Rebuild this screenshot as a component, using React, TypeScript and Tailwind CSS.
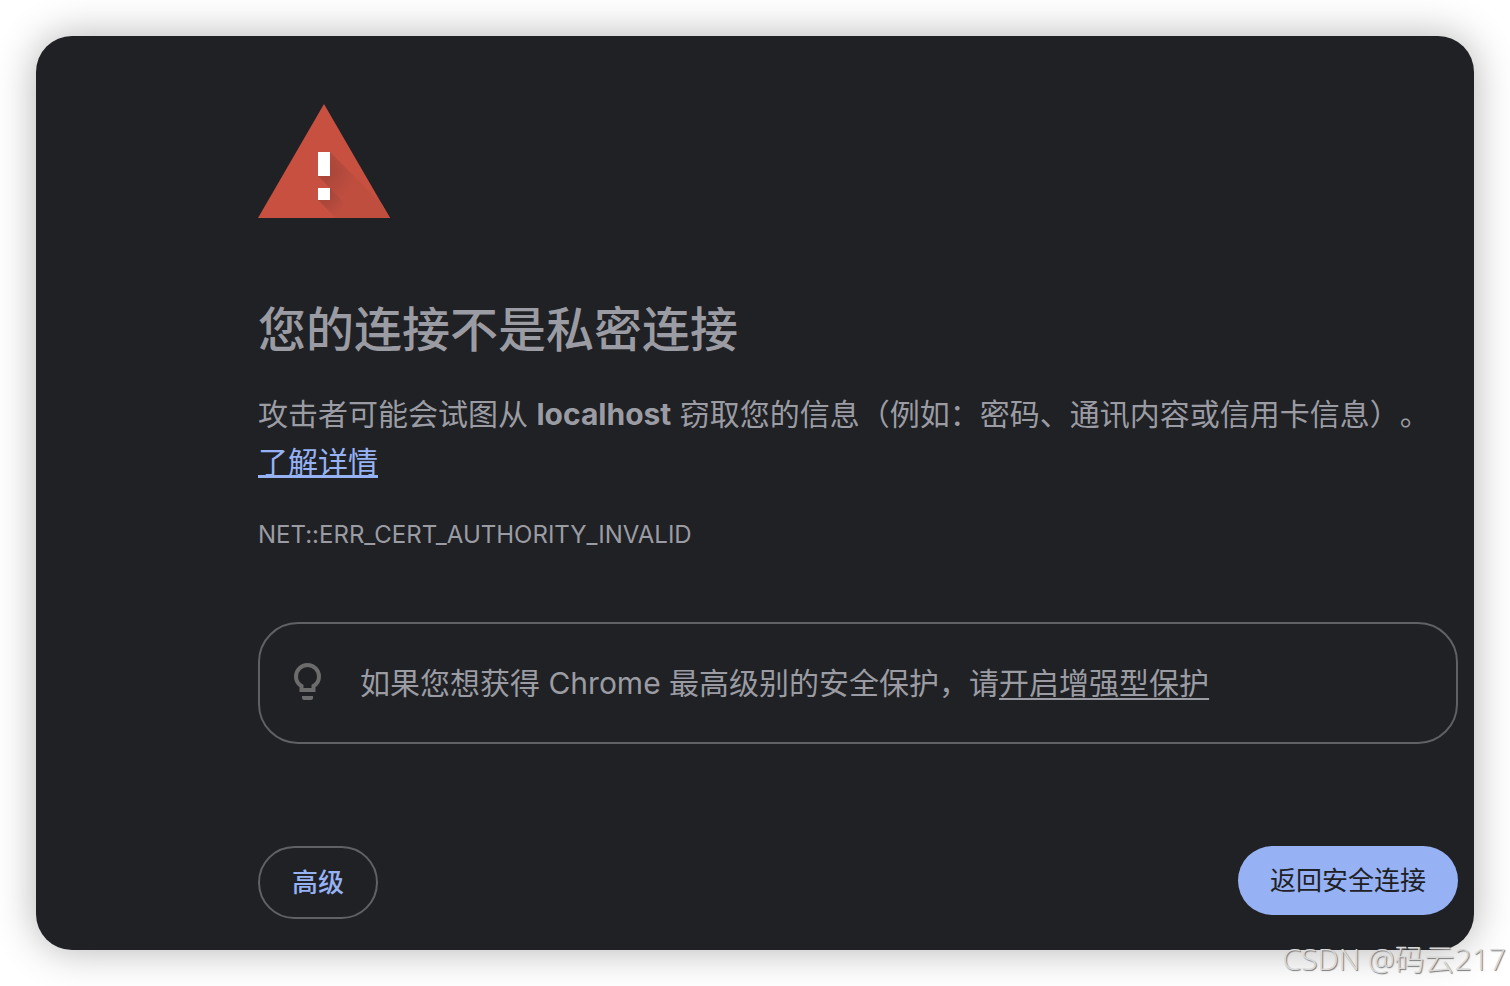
import React from "react";

const WarningIcon = () => (
  <svg width="132" height="114" viewBox="0 0 132 114" aria-hidden="true">
    <defs>
      <radialGradient id="shade" gradientUnits="userSpaceOnUse" cx="66" cy="66" r="34">
        <stop offset="0" stopColor="#a24338" />
        <stop offset="0.4" stopColor="#b0493c" />
        <stop offset="1" stopColor="#c04e3f" />
      </radialGradient>
      <radialGradient id="dotShade" gradientUnits="userSpaceOnUse" cx="66" cy="90" r="24">
        <stop offset="0" stopColor="#a24338" />
        <stop offset="0.4" stopColor="#ac483b" />
        <stop offset="1" stopColor="#c04e3f" />
      </radialGradient>
      <clipPath id="triangle">
        <path d="M66 0 132 114H0z" />
      </clipPath>
    </defs>
    <path d="M66 0 132 114H0z" fill="#c75040" />
    <g clipPath="url(#triangle)">
      <path d="M72 48 138 114H102L60 72z" fill="url(#shade)" />
      <path d="M72 84 102 114H78L60 96z" fill="url(#dotShade)" />
    </g>
    <path d="M60 48h12v24H60zM60 84h12v12H60z" fill="#fff" />
  </svg>
);

const BulbIcon = () => (
  <svg width="30" height="42" viewBox="-1 0 30 42" aria-hidden="true">
    <path
      d="M8.500 28V24C5 22 3 18.500 3 14.500a11.500 11.500 0 0 1 23 0c0 4-2 7.500-5.500 9.500V28z"
      fill="none"
      stroke="#6c6c6c"
      strokeWidth="4"
    />
    <path d="M9 34h11v2a2 2 0 0 1-2 2h-7a2 2 0 0 1-2-2z" fill="#6c6c6c" />
  </svg>
);

const App = () => {
  return (
    <div className="relative bg-white p-9 font-['Inter','Noto_Sans_CJK_SC',sans-serif] text-[#9b9ca3] [font-feature-settings:'calt'_0]">
      <main
        lang="zh-CN"
        className="rounded-[36px] bg-[#202124] pt-[68px] pr-4 pb-[31px] pl-[222px] shadow-[0_0_40px_rgba(0,0,0,0.3)]"
      >
        <WarningIcon />
        <h1 className="mt-[82px] text-5xl leading-[60px] font-medium">
          您的连接不是私密连接
        </h1>
        <p className="mt-[30px] text-[30px] leading-[48px] [text-spacing-trim:space-all]">
          攻击者可能会试图从 <strong className="font-bold">localhost</strong>{" "}
          窃取您的信息（例如：密码、通讯内容或信用卡信息）。{" "}
          <a
            href="#details"
            className="inline-block text-[#96b2f4] underline decoration-[3px] [text-decoration-skip-ink:none]"
          >
            了解详情
          </a>
        </p>
        <p className="mt-[31px] text-2xl leading-9">NET::ERR_CERT_AUTHORITY_INVALID</p>
        <div className="mt-[69px] flex items-center rounded-[40px] border-2 border-[#606164] px-8 py-9">
          <BulbIcon />
          <p className="ml-[38px] text-[30px] leading-[46px]">
            如果您想获得 Chrome 最高级别的安全保护，请
            <a
              href="#protection"
              className="underline decoration-2 underline-offset-4 [text-decoration-skip-ink:none]"
            >
              开启增强型保护
            </a>
          </p>
        </div>
        <div className="mt-[102px] flex items-start justify-between text-[26px] leading-[37px]">
          <button
            type="button"
            className="rounded-full border-2 border-[#606164] px-8 py-4 font-medium text-[#96b2f4]"
          >
            高级
          </button>
          <button
            type="button"
            className="rounded-full bg-[#96b2f4] px-8 py-4 text-[#202124]"
          >
            返回安全连接
          </button>
        </div>
      </main>
      <span className="absolute right-1 bottom-[5px] font-['Open_Sans','Noto_Sans_CJK_SC',sans-serif] text-[30px] leading-[44px] font-light text-[#d9d9d9] [text-shadow:1px_1px_1px_#777777]">
        CSDN @码云217
      </span>
    </div>
  );
};

export default App;
